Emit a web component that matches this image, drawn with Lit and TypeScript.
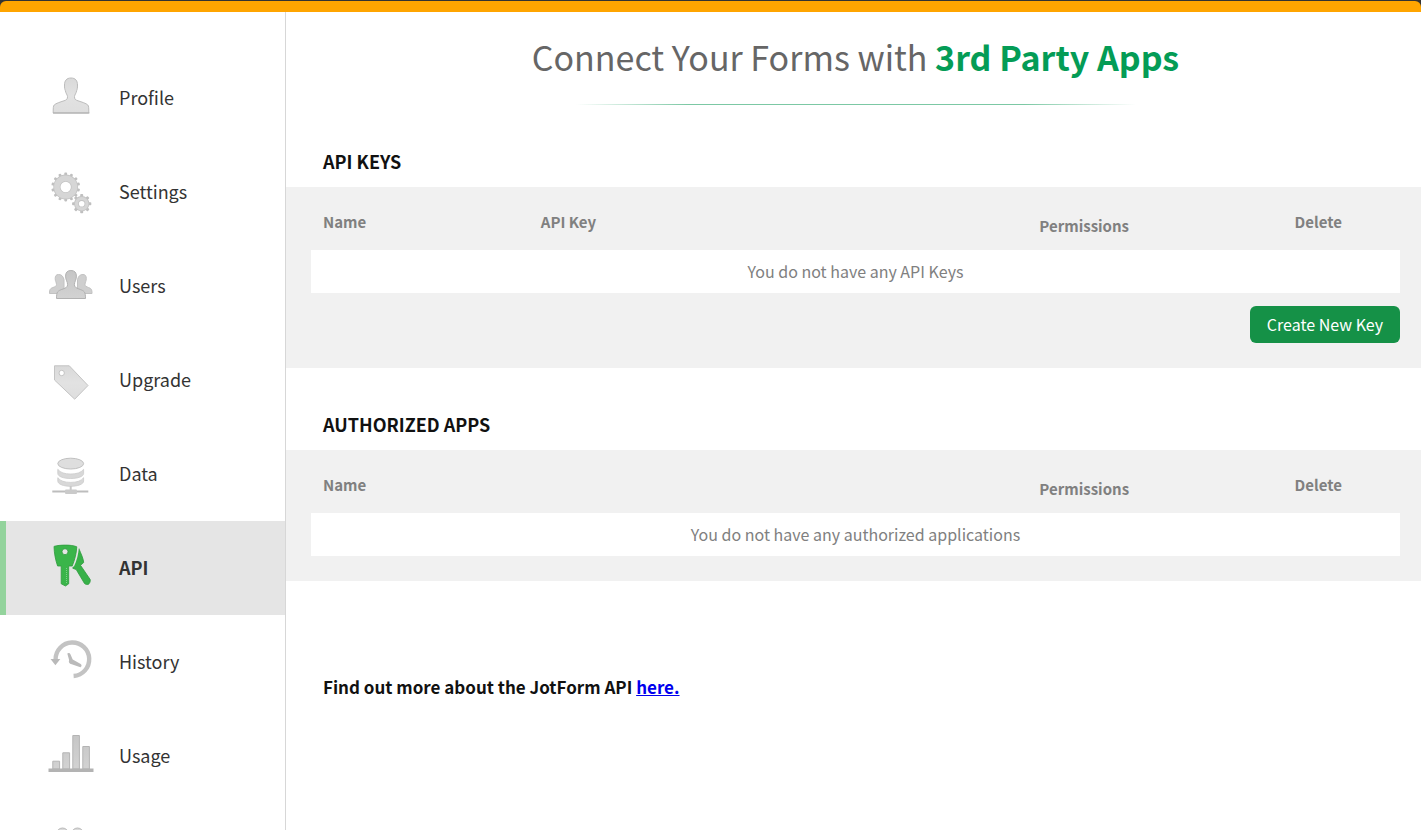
import { LitElement, html, svg, css } from "lit";
import { customElement, property } from "lit/decorators.js";

const gear = (cx: number, cy: number, r: number, hole: number, teeth: number, tooth: number) => {
  const mid = (r + hole) / 2;
  return svg`
    ${Array.from({ length: teeth }, (_, i) => svg`
      <rect x=${cx - tooth / 2} y=${cy - r - 2} width=${tooth} height="3.500" rx="0.8" fill="#bfbfbf"
        transform="rotate(${(360 / teeth) * i} ${cx} ${cy})"></rect>`)}
    <circle cx=${cx} cy=${cy} r=${mid} fill="none" stroke="#c4c4c4" stroke-width=${r - hole}></circle>
    <circle cx=${cx} cy=${cy} r=${mid} fill="none" stroke="#d6d6d6" stroke-width=${r - hole - 1.6}></circle>`;
};

const ICONS: Record<string, unknown> = {
  profile: svg`<path fill="url(#g)" stroke="#bcbcbc" d="M25 5c-4.500 0-6.500 2.800-6.500 7 0 3 .2 4.200.8 5.500.5 3 2 4 2.200 6 .2 2.600-1 3.500-3.500 4.300-4 1.300-8 2.500-9.800 4.200-1 1-1 3.500-1 8h35.600c0-4.500 0-7-1-8-1.800-1.700-5.800-2.900-9.800-4.200-2.500-.8-3.700-1.700-3.500-4.300.2-2 1.700-3 2.200-6 .6-1.300.8-2.500.8-5.500 0-4.200-2-7-6.500-7z"></path><path d="M7 40h36.400" stroke="#adadad"></path>`,
  settings: svg`${gear(19.700, 20, 12.400, 5.200, 14, 2.800)}${gear(35.700, 36.700, 7.600, 2.800, 8, 3)}`,
  users: svg`
    <path fill="#cfcfcf" stroke="#c2c2c2" d="M12.500 13.500c-2.300 0-3.300 1.500-3.300 4 0 2.800 1.200 3.600 1.300 6 0 1.700-1.500 2.200-3.500 3-2.600 1-3.500 1.600-3.500 6H18v-14c-1-3.500-2.500-5-5.500-5zM37 13.500c2.300 0 3.300 1.500 3.300 4 0 2.800-1.200 3.600-1.300 6 0 1.700 1.500 2.200 3.500 3 2.600 1 3.500 1.600 3.500 6H31.500v-14c1-3.500 2.500-5 5.500-5z"></path>
    <path fill="url(#g2)" stroke="#b2b2b2" d="M24.900 9.500c-3.700 0-5.300 2.200-5.300 5.600 0 4.200 2 5.300 2 8.600 0 2.300-1.600 3.200-4.600 4.300-5.300 1.900-6.500 2.500-6.500 9.500h29c0-7-1.200-7.600-6.500-9.500-3-1.100-4.600-2-4.600-4.300 0-3.300 2-4.400 2-8.600 0-3.400-1.700-5.600-5.500-5.600z"></path>`,
  upgrade: svg`<path fill="url(#g)" stroke="#c4c4c4" fill-rule="evenodd" stroke-linejoin="round" d="M8.500 10.800h14.800L42 30.500 28.700 44.200 8.500 25zM18.400 18a2.700 2.700 0 1 0-5.400 0 2.700 2.700 0 1 0 5.400 0z"></path>`,
  data: svg`
    <ellipse cx="24.700" cy="14.600" rx="12.900" ry="5.400" fill="#dedede" stroke="#c0c0c0"></ellipse>
    <path fill="#d8d8d8" stroke="#cbcbcb" stroke-width=".8" d="M11.800 20.300c2.500 3.400 7 4.700 12.900 4.700s10.400-1.300 12.900-4.700v4.200c0 3.100-5.900 5-12.900 5s-12.900-1.900-12.900-5zM11.800 28.700c2.500 3.400 7 4.700 12.900 4.700s10.400-1.300 12.900-4.700v3.300c0 3.300-5.900 5.300-12.900 5.300s-12.900-2-12.900-5.300z"></path>
    <path d="M24.700 37v4" stroke="#c8c8c8" stroke-width="2"></path>
    <path d="M6.300 42.600h36" stroke="#bdbdbd" stroke-width="2"></path>
    <rect x="19" y="40.500" width="12" height="4.600" rx="1" fill="#cacaca"></rect>`,
  api: svg`
    <path fill="#37b148" stroke="#2f9a3e" stroke-width=".8" stroke-linejoin="round" d="M32.800 5.500c2.200 5 4.700 10.500 4.900 14L34.500 22.300 44.200 36.500c.4 2-.7 4.300-2 4.900-1.300.3-2.700 0-3.700-.9L30.200 26.500l-3.400-1.200z"></path>
    <path fill="none" stroke="#e5e5e5" stroke-width="3" d="M31.400 3.800c-.4 7-2.200 13.500-4.900 19.400"></path>
    <path fill="#3ab54a" stroke="#2f9a3e" stroke-width=".8" stroke-linejoin="round" fill-rule="evenodd" d="M8 3.400c3-.9 7-1.300 11.500-1.300s8.500.5 11.300 1.700c-.4 7-2.200 13.500-4.600 19.200h-3.500v17.800L19.500 43l-4.300-2.200V23h-3.600C9.500 17 8.200 10.500 8 3.400zM22 8.700a3 3 0 1 0-6 0 3 3 0 1 0 6 0z"></path>
    <path d="M20.500 25v15" stroke="#7fd089" stroke-dasharray="1 1"></path>`,
  history: svg`
    <path fill="none" stroke="#c3c3c3" stroke-width="4.400" d="M9.600 22.500a16.800 16.800 0 1 1 18 16.500"></path>
    <path fill="#b9b9b9" d="M4.500 22h9.800L9.400 28.300z"></path>
    <path fill="#bababa" d="M21.300 16.500c1-1 2.600-.6 3 .6l2.400 5.500 8 4.300c1.600 1 .7 3.600-1 3.200l-8-2.800c-2.400-.4-3.400-2.200-2.600-4.400z"></path>`,
  usage: svg`
    <g fill="url(#g2)" stroke="#b4b4b4"><path d="M6.800 30.200h6.800V38H6.800zM16.800 21.800h6.800V38h-6.800zM26.800 4.500h6.600V38h-6.600zM36.800 15.500h6.600V38h-6.600z"></path></g>
    <path fill="#b3b3b3" d="M2.500 37.600h45V41h-45z"></path>`,
  more: svg`<g fill="#dadada" stroke="#b8b8b8"><circle cx="16.500" cy="9" r="6"></circle><circle cx="31.500" cy="9" r="6"></circle></g>`,
};

@customElement("nav-icon")
class NavIcon extends LitElement {
  @property() name = "";
  static styles = css`
    :host { display: block; flex: none; width: 50px; height: 50px; }
    svg { display: block; }
  `;
  render() {
    return html`<svg width="50" height="50" viewBox="0 0 50 50" fill="none" aria-hidden="true">
      <defs>
        <linearGradient id="g" x1="0" y1="0" x2="0" y2="1"><stop offset="0" stop-color="#d9d9d9"></stop><stop offset=".5" stop-color="#e2e2e2"></stop><stop offset="1" stop-color="#dedede"></stop></linearGradient>
        <linearGradient id="g2" x1="0" y1="0" x2="0" y2="1"><stop offset="0" stop-color="#c6c6c6"></stop><stop offset="1" stop-color="#d2d2d2"></stop></linearGradient>
      </defs>
      ${ICONS[this.name]}
    </svg>`;
  }
}

const NAV = [
  ["profile", "Profile"],
  ["settings", "Settings"],
  ["users", "Users"],
  ["upgrade", "Upgrade"],
  ["data", "Data"],
  ["api", "API"],
  ["history", "History"],
  ["usage", "Usage"],
];

@customElement("app-root")
class AppRoot extends LitElement {
  static styles = css`
    :host {
      display: flex;
      flex-direction: column;
      height: 100vh;
      overflow: hidden;
      background: #fff;
      color: #333;
      font-family: "Noto Sans CJK SC", "Noto Sans", sans-serif;
      font-size: 18px;
      line-height: 24px;
    }
    * { box-sizing: border-box; }
    .top { flex: none; background: #333; padding-top: 1px; }
    .stripe { height: 11px; background: #ffa500; border-radius: 6px 6px 0 0; }
    .body { display: flex; flex: 1; min-height: 0; }
    .side {
      flex: none;
      width: 286px;
      padding-top: 39px;
      border-right: 1px solid #d7d7d7;
      overflow: hidden;
    }
    .item {
      display: flex;
      align-items: center;
      gap: 23px;
      height: 94px;
      padding-left: 40px;
      border-left: 6px solid transparent;
      color: #333;
      font-size: 18px;
      text-decoration: none;
    }
    .item span { padding-bottom: 2px; }
    .item.active {
      background: #e5e5e5;
      border-left-color: #93d39c;
      font-weight: 700;
    }
    main { flex: 1; min-width: 0; padding-top: 21px; overflow: hidden; }
    header { padding: 0 21px 0 25px; }
    h1 {
      margin: 0;
      font-size: 34px;
      line-height: 48px;
      font-weight: 400;
      color: #666;
      text-align: center;
    }
    h1 strong { color: #049c56; font-weight: 700; }
    .rule {
      width: 560px;
      max-width: 100%;
      height: 1px;
      margin: 23px auto 0;
      background: linear-gradient(90deg, rgba(124, 200, 164, 0), #7cc8a4 20%, #7cc8a4 80%, rgba(124, 200, 164, 0));
    }
    h2 {
      margin: 44px 37px 14px;
      font-size: 18px;
      line-height: 24px;
      font-weight: 700;
      color: #111;
    }
    .panel { padding: 0 21px 25px 25px; background: #f1f1f1; }
    table { width: 100%; border-collapse: collapse; table-layout: fixed; }
    th {
      padding: 23px 12px 16px;
      color: #808080;
      font-size: 15px;
      font-weight: 700;
      text-align: left;
    }
    .wide { width: 57%; }
    .name { width: 20%; }
    .key { width: 37%; }
    .perm { width: 28%; padding: 27px 12px 12px; text-align: center; }
    .del { width: 15%; text-align: center; }
    td {
      height: 43px;
      padding: 0 12px 2px;
      background: #fff;
      color: #808080;
      font-size: 16px;
      text-align: center;
    }
    .actions { display: flex; justify-content: flex-end; padding-top: 13px; }
    button {
      width: 150px;
      height: 37px;
      padding: 0 0 2px;
      border: 0;
      border-radius: 6px;
      background: #159147;
      color: #fff;
      font: inherit;
      font-size: 16px;
      cursor: pointer;
    }
    .more {
      margin: 94px 37px 0;
      color: #111;
      font-size: 17px;
      font-weight: 700;
    }
    .more a { color: #0000ee; }
  `;

  render() {
    return html`
      <div class="top"><div class="stripe"></div></div>
      <div class="body">
        <nav class="side">
          ${NAV.map(([icon, label]) => html`
            <a class="item ${icon === "api" ? "active" : ""}" href="#${icon}"><nav-icon name=${icon}></nav-icon><span>${label}</span></a>`)}
          <div class="item"><nav-icon name="more"></nav-icon></div>
        </nav>
        <main>
          <header>
            <h1>Connect Your Forms with <strong>3rd Party Apps</strong></h1>
            <div class="rule"></div>
          </header>
          <h2>API KEYS</h2>
          <section class="panel">
            <table>
              <thead><tr>
                <th class="name">Name</th><th class="key">API Key</th><th class="perm">Permissions</th><th class="del">Delete</th>
              </tr></thead>
              <tbody><tr><td colspan="4">You do not have any API Keys</td></tr></tbody>
            </table>
            <div class="actions"><button type="button">Create New Key</button></div>
          </section>
          <h2>AUTHORIZED APPS</h2>
          <section class="panel">
            <table>
              <thead><tr>
                <th class="wide">Name</th><th class="perm">Permissions</th><th class="del">Delete</th>
              </tr></thead>
              <tbody><tr><td colspan="3">You do not have any authorized applications</td></tr></tbody>
            </table>
          </section>
          <p class="more">Find out more about the JotForm API <a href="#docs">here.</a></p>
        </main>
      </div>
    `;
  }
}
